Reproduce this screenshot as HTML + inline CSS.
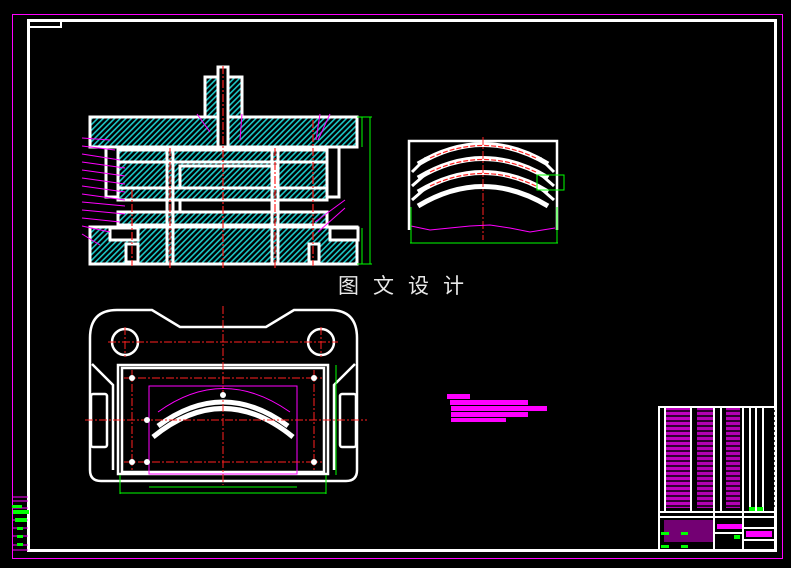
<!DOCTYPE html>
<html><head><meta charset="utf-8"><style>
html,body{margin:0;padding:0;background:#000;width:791px;height:568px;overflow:hidden}
svg{display:block}
</style></head><body>
<svg width="791" height="568" viewBox="0 0 791 568" xmlns="http://www.w3.org/2000/svg">
<defs>
<pattern id="h" width="4" height="4" patternUnits="userSpaceOnUse" patternTransform="rotate(45)">
<rect width="4" height="4" fill="#000"/><rect width="1.6" height="4" fill="#1cc8c8"/>
</pattern>
</defs>
<rect x="12.5" y="14.5" width="770" height="544" fill="none" stroke="#ff00ff" stroke-width="1"/>
<rect x="28.5" y="20.5" width="747" height="530" fill="none" stroke="#fff" stroke-width="3"/>
<path d="M28 21H61V27H28" fill="none" stroke="#fff" stroke-width="2"/>
<g stroke="#ff00ff" stroke-width="1"><line x1="12" y1="497" x2="28" y2="497"/><line x1="12" y1="501" x2="28" y2="501"/><line x1="12" y1="508" x2="28" y2="508"/><line x1="12" y1="512" x2="28" y2="512"/><line x1="12" y1="520" x2="28" y2="520"/><line x1="12" y1="528" x2="28" y2="528"/><line x1="12" y1="536" x2="28" y2="536"/><line x1="12" y1="545" x2="28" y2="545"/><line x1="12" y1="550" x2="28" y2="550"/></g>
<g fill="#00ff00"><rect x="12" y="505" width="10" height="3"/><rect x="13" y="510" width="16" height="4"/><rect x="15" y="518" width="12" height="4"/><rect x="17" y="527" width="6" height="3"/><rect x="17" y="535" width="6" height="3"/><rect x="17" y="543" width="6" height="3"/></g>

<g stroke="#fff" stroke-width="3">
<rect x="90" y="117" width="267" height="30" fill="url(#h)"/>
<rect x="205" y="77" width="37" height="40" fill="url(#h)"/>
<rect x="218" y="67" width="10" height="85" fill="#000"/>
<rect x="106" y="147" width="233" height="50" fill="none"/>
<rect x="118" y="150" width="209" height="12" fill="url(#h)"/>
<rect x="118" y="162" width="209" height="26" fill="url(#h)"/>
<rect x="180" y="166" width="95" height="22" fill="url(#h)"/>
<rect x="118" y="188" width="209" height="12" fill="url(#h)"/>
<rect x="180" y="200" width="95" height="12" fill="#000"/>
<rect x="118" y="212" width="209" height="13" fill="url(#h)"/>
<rect x="90" y="227" width="267" height="37" fill="url(#h)"/>
<rect x="110" y="228" width="28" height="12" fill="#000"/>
<rect x="330" y="228" width="28" height="12" fill="#000"/>
<line x1="167" y1="150" x2="167" y2="264"/><line x1="173" y1="150" x2="173" y2="264"/>
<line x1="272" y1="150" x2="272" y2="264"/><line x1="278" y1="150" x2="278" y2="264"/>
<rect x="126" y="244" width="12" height="18" fill="#000"/>
<rect x="309" y="244" width="10" height="18" fill="#000"/>
</g>
<g stroke="#ff2020" stroke-width="1.2" stroke-dasharray="8,2,2,2"><line x1="223" y1="66" x2="223" y2="268"/><line x1="170" y1="148" x2="170" y2="268"/><line x1="275" y1="148" x2="275" y2="268"/><line x1="132" y1="190" x2="132" y2="266"/><line x1="313" y1="120" x2="313" y2="266"/></g>
<g stroke="#ff00ff" stroke-width="1">
<line x1="82" y1="138" x2="110" y2="140"/><line x1="82" y1="146" x2="115" y2="150"/><line x1="82" y1="154" x2="120" y2="160"/><line x1="82" y1="162" x2="125" y2="168"/><line x1="82" y1="170" x2="125" y2="176"/><line x1="82" y1="178" x2="125" y2="184"/><line x1="82" y1="186" x2="125" y2="192"/><line x1="82" y1="194" x2="125" y2="200"/><line x1="82" y1="202" x2="125" y2="206"/><line x1="82" y1="210" x2="125" y2="214"/><line x1="82" y1="218" x2="120" y2="222"/><line x1="82" y1="226" x2="110" y2="232"/><line x1="82" y1="234" x2="100" y2="245"/>
<line x1="197" y1="114" x2="210" y2="132"/><line x1="242" y1="114" x2="240" y2="140"/><line x1="320" y1="114" x2="316" y2="140"/><line x1="330" y1="114" x2="318" y2="140"/><line x1="345" y1="200" x2="315" y2="222"/><line x1="345" y1="208" x2="318" y2="232"/>
</g>
<g stroke="#00ff00" stroke-width="1" fill="none"><line x1="362" y1="117" x2="362" y2="147"/><line x1="370" y1="117" x2="370" y2="264"/><line x1="362" y1="228" x2="362" y2="264"/><line x1="357" y1="117" x2="372" y2="117"/><line x1="357" y1="264" x2="372" y2="264"/></g>

<path d="M409 230V141H557V230" fill="none" stroke="#fff" stroke-width="2.5"/>
<g fill="none" stroke="#fff" stroke-width="5">
<path d="M418 164Q483 125 548 164"/><path d="M418 178Q483 139 548 178"/><path d="M418 192Q483 153 548 192"/><path d="M418 206Q483 167 548 206"/>
</g>
<g fill="none" stroke="#fff" stroke-width="3"><path d="M412 172L426 158M412 186L428 172M412 200L428 186M554 172L540 158M554 186L538 172M554 200L538 186"/></g>
<g fill="none" stroke="#ff2020" stroke-width="1.2" stroke-dasharray="5,2"><path d="M430 158Q483 133 536 158"/><path d="M430 172Q483 147 536 172"/><path d="M430 186Q483 161 536 186"/></g>
<line x1="483" y1="137" x2="483" y2="240" stroke="#ff2020" stroke-width="1" stroke-dasharray="8,2,2,2"/>
<path d="M411 226L430 230L450 228L470 226L490 225L510 228L530 232L555 228" fill="none" stroke="#ff00ff" stroke-width="1"/>
<g stroke="#00ff00" stroke-width="1" fill="none"><line x1="410" y1="243" x2="558" y2="243"/><line x1="411" y1="207" x2="411" y2="243"/><line x1="557" y1="207" x2="557" y2="243"/><rect x="537" y="175" width="27" height="15"/></g>

<text x="338" y="293" fill="#e8e8e8" font-family="'Liberation Sans','Noto Sans CJK SC',sans-serif" font-size="21" letter-spacing="14">图文设计</text>

<g fill="none" stroke="#fff" stroke-width="2.5">
<path d="M117 310H152L180 327H266L294 310H330Q357 310 357 338V470Q357 481 346 481H101Q90 481 90 470V338Q90 310 117 310Z"/>
<path d="M92 364L113 385V470"/><path d="M355 364L334 385V470"/>
<rect x="118" y="365" width="210" height="109"/>
<rect x="122" y="368" width="202" height="104"/>
<rect x="91" y="394" width="16" height="53" rx="2"/><rect x="340" y="394" width="16" height="53" rx="2"/>
<circle cx="125" cy="342" r="13"/><circle cx="321" cy="342" r="13"/>
</g>
<g fill="none" stroke="#fff" stroke-width="5"><path d="M153 437Q223 380 293 437"/><path d="M158 426Q223 378 288 426"/></g>
<rect x="149" y="386" width="148" height="88" fill="none" stroke="#ff00ff" stroke-width="1"/>
<path d="M158 412Q223 365 290 412" fill="none" stroke="#ff00ff" stroke-width="1"/>
<g stroke="#ff2020" stroke-width="1" stroke-dasharray="8,2,2,2"><line x1="108" y1="342" x2="338" y2="342"/><line x1="125" y1="327" x2="125" y2="357"/><line x1="321" y1="327" x2="321" y2="357"/><line x1="223" y1="306" x2="223" y2="485"/><line x1="85" y1="420" x2="367" y2="420"/><line x1="124" y1="378" x2="322" y2="378"/><line x1="124" y1="462" x2="322" y2="462"/><line x1="132" y1="370" x2="132" y2="470"/><line x1="314" y1="370" x2="314" y2="470"/></g>
<g fill="#fff"><circle cx="132" cy="378" r="3"/><circle cx="314" cy="378" r="3"/><circle cx="132" cy="462" r="3"/><circle cx="314" cy="462" r="3"/><circle cx="147" cy="420" r="3"/><circle cx="147" cy="462" r="3"/><circle cx="223" cy="395" r="3"/></g>
<g stroke="#00ff00" stroke-width="1" fill="none"><line x1="120" y1="493" x2="326" y2="493"/><line x1="149" y1="487" x2="297" y2="487"/><line x1="336" y1="365" x2="336" y2="475"/><line x1="120" y1="475" x2="120" y2="494"/><line x1="326" y1="475" x2="326" y2="494"/></g>

<g fill="#ff00ff"><rect x="447" y="394" width="23" height="5"/><rect x="450" y="400" width="78" height="5"/><rect x="451" y="406" width="96" height="5"/><rect x="451" y="412" width="77" height="5"/><rect x="451" y="418" width="55" height="4"/></g>

<rect x="659" y="407" width="117" height="144" fill="none" stroke="#fff" stroke-width="2"/>
<g fill="#ff00ff"><rect x="664" y="408" width="26" height="100" opacity="0.75"/><rect x="697" y="408" width="16" height="100" opacity="0.7"/><rect x="726" y="408" width="14" height="100" opacity="0.7"/><rect x="717" y="524" width="26" height="5"/><rect x="746" y="531" width="26" height="6"/><rect x="664" y="520" width="50" height="22" opacity="0.45"/></g>
<g stroke="#000" stroke-width="1.5">
<line x1="660" y1="411" x2="775" y2="411"/><line x1="660" y1="416" x2="775" y2="416"/><line x1="660" y1="421" x2="775" y2="421"/><line x1="660" y1="426" x2="775" y2="426"/><line x1="660" y1="431" x2="775" y2="431"/><line x1="660" y1="436" x2="775" y2="436"/><line x1="660" y1="441" x2="775" y2="441"/><line x1="660" y1="446" x2="775" y2="446"/><line x1="660" y1="451" x2="775" y2="451"/><line x1="660" y1="456" x2="775" y2="456"/><line x1="660" y1="461" x2="775" y2="461"/><line x1="660" y1="466" x2="775" y2="466"/><line x1="660" y1="471" x2="775" y2="471"/><line x1="660" y1="476" x2="775" y2="476"/><line x1="660" y1="481" x2="775" y2="481"/><line x1="660" y1="486" x2="775" y2="486"/><line x1="660" y1="491" x2="775" y2="491"/><line x1="660" y1="496" x2="775" y2="496"/><line x1="660" y1="501" x2="775" y2="501"/><line x1="660" y1="506" x2="775" y2="506"/>
</g>
<g stroke="#fff" stroke-width="2"><line x1="665" y1="408" x2="665" y2="512"/><line x1="691" y1="408" x2="691" y2="512"/><line x1="714" y1="408" x2="714" y2="550"/><line x1="721" y1="408" x2="721" y2="512"/><line x1="743" y1="408" x2="743" y2="550"/><line x1="750" y1="408" x2="750" y2="512"/><line x1="756" y1="408" x2="756" y2="512"/><line x1="763" y1="408" x2="763" y2="512"/><line x1="660" y1="512" x2="775" y2="512"/><line x1="660" y1="517" x2="775" y2="517"/><line x1="714" y1="533" x2="743" y2="533"/><line x1="743" y1="528" x2="775" y2="528"/><line x1="743" y1="540" x2="775" y2="540"/></g>
<g fill="#00ff00"><rect x="749" y="507" width="6" height="4"/><rect x="757" y="507" width="6" height="4"/><rect x="661" y="532" width="8" height="3"/><rect x="681" y="532" width="7" height="3"/><rect x="661" y="545" width="8" height="3"/><rect x="681" y="545" width="7" height="3"/><rect x="734" y="535" width="6" height="4"/></g>
</svg>
</body></html>
